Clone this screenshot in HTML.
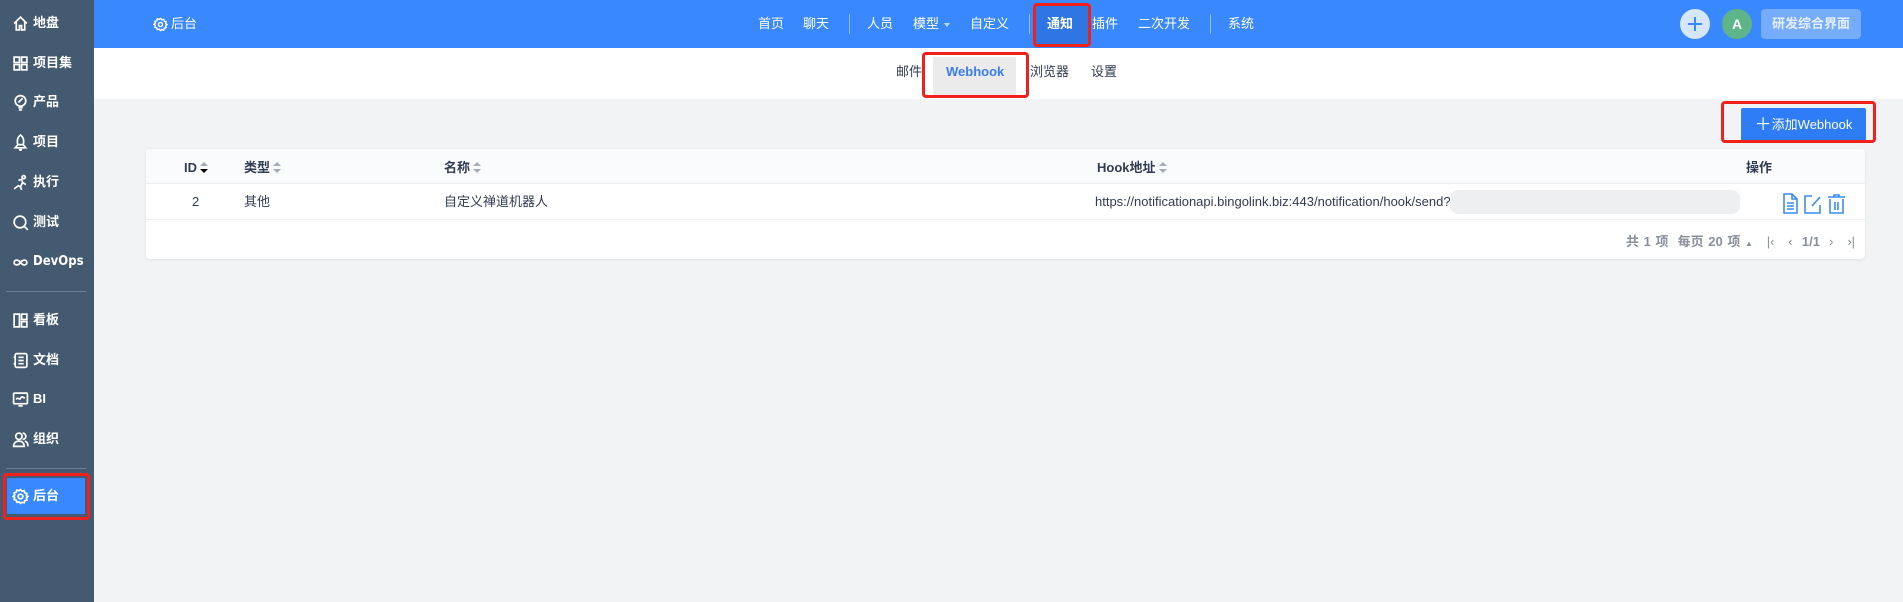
<!DOCTYPE html>
<html><head><meta charset="utf-8">
<style>
*{margin:0;padding:0;box-sizing:border-box}
body{width:1903px;height:602px;overflow:hidden;background:#f2f3f5;font-family:"Liberation Sans","Noto Sans CJK SC",sans-serif;font-size:13px;color:#313c52;position:relative}
.abs{position:absolute}
#side{left:0;top:0;width:94px;height:602px;background:#435a71}
.si{position:absolute;left:12px;color:#fff;font-size:13px;font-weight:bold;display:flex;align-items:center;height:20px;line-height:20px}
.si svg{width:17px;height:17px;margin-right:4px;fill:none;stroke:#fff;stroke-width:1.6}
.div{position:absolute;left:6px;width:80px;height:1px;background:#6b7f95}
#top{left:94px;top:0;width:1809px;height:48px;background:#3a88fe}
.n{position:absolute;top:16px;color:#fff;font-size:13px;line-height:16px}
.sep{position:absolute;top:14px;width:1px;height:20px;background:rgba(255,255,255,.45)}
#sub{left:94px;top:48px;width:1809px;height:51px;background:#fff}
.s{position:absolute;top:64px;font-size:13px;color:#313c52;line-height:16px}
.red{position:absolute;border:3px solid #f0211b;border-radius:4px}
#card{left:146px;top:149px;width:1719px;height:110px;background:#fff;border-radius:4px;box-shadow:0 1px 3px rgba(0,0,0,.08)}
.th{position:absolute;top:160px;font-weight:bold;font-size:13px;color:#313c52;line-height:16px;display:flex;align-items:center}
.sort{display:inline-block;width:8px;height:12px;margin-left:3px;position:relative}
.sort:before{content:"";position:absolute;left:0;top:0;border:4px solid transparent;border-bottom:4.5px solid #a6acb6;border-top:0}
.sort:after{content:"";position:absolute;left:0;top:6.5px;border:4px solid transparent;border-top:4.5px solid #a6acb6;border-bottom:0}
.sort.d:after{border-top-color:#000}
.td{position:absolute;top:194px;font-size:13px;color:#313c52;line-height:16px}
</style></head><body>
<div id="side" class="abs">
 <div class="si" style="top:13px"><svg viewBox="0 0 16 16"><path d="M2 8 8 2l6 6M4 6.5V14h3v-4h2v4h3V6.5"/></svg>地盘</div>
 <div class="si" style="top:53px"><svg viewBox="0 0 16 16"><rect x="2" y="2" width="5" height="5"/><rect x="9" y="2" width="5" height="5"/><rect x="2" y="9" width="5" height="5"/><rect x="9" y="9" width="5" height="5"/></svg>项目集</div>
 <div class="si" style="top:92px"><svg viewBox="0 0 16 16"><circle cx="8" cy="6.5" r="5"/><path d="M6 13h4M6.5 15h3M6 8l4-4"/></svg>产品</div>
 <div class="si" style="top:132px"><svg viewBox="0 0 16 16"><path d="M8 1c3 2 3.5 6 2.5 9h-5C4.5 7 5 3 8 1zM5.5 10 3 13h10l-2.5-3M7 14l1 2 1-2"/></svg>项目</div>
 <div class="si" style="top:172px"><svg viewBox="0 0 16 16"><circle cx="11" cy="3" r="1.5"/><path d="M2 14l4-3 2 1 2-4 3 2M6 6l3-1 1 3M8 12l1 3"/></svg>执行</div>
 <div class="si" style="top:212px"><svg viewBox="0 0 16 16"><circle cx="7.5" cy="7.5" r="5.5"/><path d="M11.5 11.5 15 15"/></svg>测试</div>
 <div class="si" style="top:252px"><svg viewBox="0 0 16 16"><path d="M8 8c-2-3-6-3-6 0s4 3 6 0 6-3 6 0-4 3-6 0"/></svg><span style="font-family:'DejaVu Sans Condensed','Liberation Sans',sans-serif">DevOps</span></div>
 <div class="div" style="top:291px"></div>
 <div class="si" style="top:310px"><svg viewBox="0 0 16 16"><rect x="2" y="2" width="5" height="12"/><rect x="9" y="2" width="5" height="5"/><rect x="9" y="9" width="5" height="5"/></svg>看板</div>
 <div class="si" style="top:350px"><svg viewBox="0 0 16 16"><rect x="3" y="1.5" width="11" height="13" rx="1.5"/><path d="M6 5h5M6 8h5M6 11h5M1.5 5h2M1.5 11h2"/></svg>文档</div>
 <div class="si" style="top:389px"><svg viewBox="0 0 16 16"><rect x="1.5" y="2" width="13" height="10" rx="1"/><path d="M4 8c1.5-3 3 1 4-1s2-2 4 0M6 14h4"/></svg>BI</div>
 <div class="si" style="top:429px"><svg viewBox="0 0 16 16"><circle cx="6.5" cy="5" r="3"/><path d="M1.5 14.5c0-3 2-5 5-5s5 2 5 5zM10 2a3 3 0 0 1 0 6M12 9.5c2 .5 3 2.5 3 5"/></svg>组织</div>
 <div class="div" style="top:468px"></div>
 <div class="abs" style="left:7px;top:478px;width:78px;height:36px;background:#3a88fe"></div>
 <div class="si" style="top:486px"><svg viewBox="0 0 16 16"><circle cx="8" cy="8" r="2.2"/><path d="M8 1.5l1.4 1.5 2-.5.6 2 2 .6-.5 2L15 8l-1.5 1.4.5 2-2 .6-.6 2-2-.5L8 14.5l-1.4-1.5-2 .5-.6-2-2-.6.5-2L1 8l1.5-1.4-.5-2 2-.6.6-2 2 .5z"/></svg>后台</div>
 <div class="red" style="left:3px;top:473px;width:87px;height:47px"></div>
</div>

<div id="top" class="abs"></div>
<div class="n" style="left:153px;display:flex;align-items:center"><svg viewBox="0 0 16 16" width="15" height="15" style="margin-right:3px;fill:none;stroke:#fff;stroke-width:1.5"><circle cx="8" cy="8" r="2.2"/><path d="M8 1.5l1.4 1.5 2-.5.6 2 2 .6-.5 2L15 8l-1.5 1.4.5 2-2 .6-.6 2-2-.5L8 14.5l-1.4-1.5-2 .5-.6-2-2-.6.5-2L1 8l1.5-1.4-.5-2 2-.6.6-2 2 .5z"/></svg>后台</div>
<div class="n" style="left:758px">首页</div>
<div class="n" style="left:803px">聊天</div>
<div class="sep" style="left:849px"></div>
<div class="n" style="left:867px">人员</div>
<div class="n" style="left:913px">模型</div>
<div class="abs" style="left:944px;top:23px;border:3px solid transparent;border-top:4px solid rgba(255,255,255,.7)"></div>
<div class="n" style="left:970px">自定义</div>
<div class="sep" style="left:1029px"></div>
<div class="abs" style="left:1036px;top:6px;width:52px;height:38px;background:#2f76e4"></div>
<div class="n" style="left:1047px;font-weight:bold">通知</div>
<div class="red" style="left:1033px;top:3px;width:58px;height:44px"></div>
<div class="n" style="left:1092px">插件</div>
<div class="n" style="left:1138px">二次开发</div>
<div class="sep" style="left:1210px"></div>
<div class="n" style="left:1228px">系统</div>
<div class="abs" style="left:1680px;top:9px;width:30px;height:30px;border-radius:50%;background:#d7e6ff"></div>
<div class="abs" style="left:1688px;top:23px;width:14px;height:2px;background:#3a88fe"></div>
<div class="abs" style="left:1694px;top:17px;width:2px;height:14px;background:#3a88fe"></div>
<div class="abs" style="left:1722px;top:9px;width:30px;height:30px;border-radius:50%;background:#5fb58a;color:#fff;font-size:14px;font-weight:bold;text-align:center;line-height:30px">A</div>
<div class="abs" style="left:1761px;top:9px;width:100px;height:30px;border-radius:4px;background:rgba(255,255,255,.3);color:#e6efff;font-size:13px;font-weight:bold;text-align:center;line-height:30px">研发综合界面</div>

<div id="sub" class="abs"></div>
<div class="s" style="left:896px">邮件</div>
<div class="abs" style="left:933px;top:57px;width:83px;height:38px;background:#ebebeb"></div>
<div class="s" style="left:946px;color:#3a7df0;font-weight:bold">Webhook</div>
<div class="red" style="left:922px;top:52px;width:107px;height:46px"></div>
<div class="s" style="left:1030px">浏览器</div>
<div class="s" style="left:1091px">设置</div>

<div class="abs" style="left:1741px;top:108px;width:125px;height:33px;background:#2e7df6;border-radius:2px;color:#fff;font-size:13px;line-height:33px;text-align:center"><span style="font-size:17px;vertical-align:-1px">＋</span>添加Webhook</div>
<div class="red" style="left:1721px;top:101px;width:155px;height:42px"></div>

<div id="card" class="abs">
 <div class="abs" style="left:0;top:0;width:1719px;height:35px;background:#fafbfd;border-radius:4px 4px 0 0;border-bottom:1px solid #edeef0"></div>
 <div class="abs" style="left:0;top:70px;width:1719px;height:1px;background:#edeef0"></div>
</div>
<div class="th" style="left:184px">ID<span class="sort d"></span></div>
<div class="th" style="left:244px">类型<span class="sort"></span></div>
<div class="th" style="left:444px">名称<span class="sort"></span></div>
<div class="th" style="left:1097px">Hook地址<span class="sort"></span></div>
<div class="th" style="left:1746px">操作</div>
<div class="td" style="left:192px">2</div>
<div class="td" style="left:244px">其他</div>
<div class="td" style="left:444px">自定义禅道机器人</div>
<div class="td" style="left:1095px">https://notificationapi.bingolink.biz:443/notification/hook/send?</div>
<div class="abs" style="left:1450px;top:190px;width:290px;height:24px;background:#eeeff1;border-radius:8px"></div>
<svg class="abs" style="left:1782px;top:193px" width="80" height="22" viewBox="0 0 80 22" fill="none" stroke="#3b8bf5" stroke-width="1.6">
 <path d="M2 1h8l5 5v14H2zM10 1v5h5M5 10h7M5 13h7M5 16h7"/>
 <path d="M30 3h-7v17h15v-8M30 13l8-9"/>
 <path d="M46 4h17M52 4V2h5v2M48 6v14h13V6M53 9v8M56 9v8"/>
</svg>
<div class="abs" style="left:1626px;top:231px;font-size:13px;color:#8a909b;font-weight:bold;white-space:nowrap;word-spacing:1px">共 1 项 &nbsp;每页 20 项 <span style="font-size:8px">▲</span> &nbsp;&nbsp;<span style="font-weight:normal">|‹ &nbsp;&nbsp;‹</span> &nbsp;1/1 &nbsp;<span style="font-weight:normal">› &nbsp;&nbsp;›|</span></div>
</body></html>
